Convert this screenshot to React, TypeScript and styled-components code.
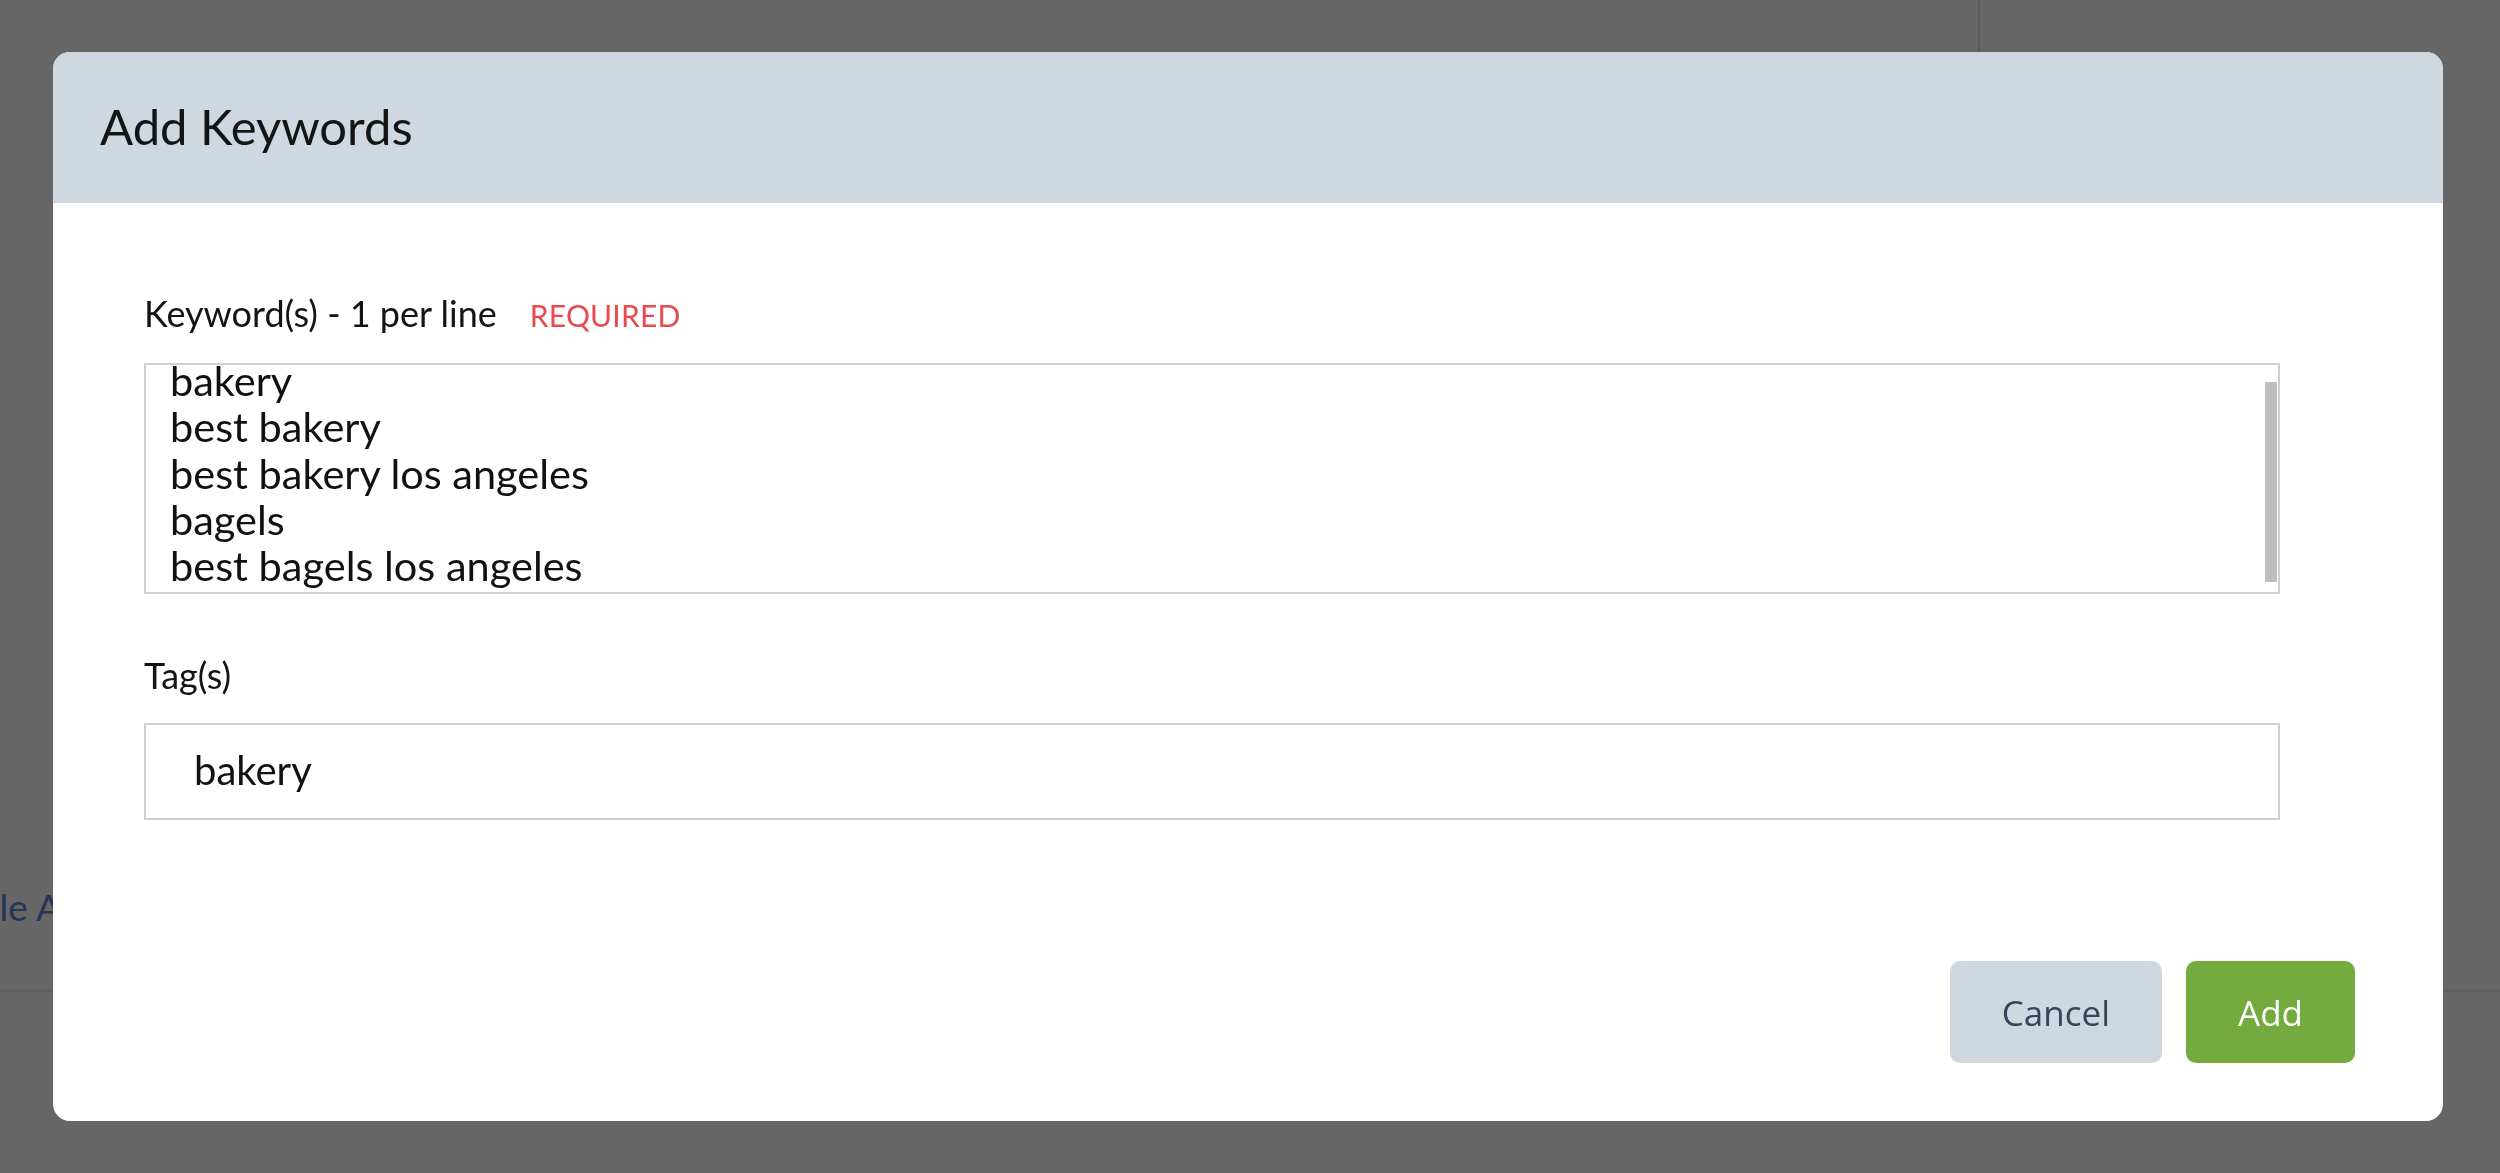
import { useEffect, useRef } from 'react';
import styled, { createGlobalStyle } from 'styled-components';

const GlobalStyle = createGlobalStyle`
    html, body {
        margin: 0;
        padding: 0;
        background: #ffffff;
        font-family: Lato, "Open Sans", sans-serif;
    }
`;

const Page = styled.div`
    width: 100vw;
    height: 100vh;
    overflow: hidden;
    background: #ffffff;
`;

const PageTopBar = styled.div`
    display: flex;
    height: 210px;
`;

const PageTopSection = styled.div`
    flex: 1;
`;

const PageTopAside = styled.div`
    width: 520px;
    border-left: 2px solid #e6e6e6;
`;

const PageRow = styled.div`
    display: flex;
    align-items: center;
    height: 200px;
    margin-top: 580px;
    border-bottom: 2px solid #eeeeee;
`;

const PageSideLink = styled.div`
    display: flex;
    justify-content: flex-end;
    width: 102px;
    overflow: hidden;
    white-space: nowrap;
    padding-top: 32px;
`;

const PageLinkText = styled.span`
    font-size: 37px;
    color: #5b86d6;
`;

const Overlay = styled.div`
    position: fixed;
    inset: 0;
    background: rgba(0, 0, 0, 0.6);
    display: flex;
    align-items: flex-start;
    padding: 52px 0 0 53px;
`;

const Modal = styled.div`
    width: 2390px;
    background: #ffffff;
    border-radius: 17px;
    overflow: hidden;
`;

const ModalHeader = styled.div`
    display: flex;
    align-items: center;
    height: 151px;
    padding-left: 47px;
    background: #cfd7e0;
`;

const ModalTitle = styled.h2`
    margin: 0;
    font-size: 49px;
    font-weight: 400;
    color: #141414;
    padding-bottom: 4px;
`;

const ModalBody = styled.div`
    display: flex;
    flex-direction: column;
    width: 2136px;
    padding: 88px 0 0 91px;
`;

type FieldLabelProps = {
    gap: number;
};

const FieldLabel = styled.label<FieldLabelProps>`
    display: flex;
    align-items: baseline;
    gap: 33px;
    font-size: 36px;
    line-height: 44px;
    color: #141414;
    margin-bottom: ${props => props.gap}px;
`;

const RequiredTag = styled.span`
    font-size: 30px;
    color: #e84a4f;
    letter-spacing: 0.2px;
`;

const KeywordBox = styled.div`
    display: flex;
    box-sizing: border-box;
    width: 100%;
    height: 231px;
    margin-bottom: 59px;
    border: 2px solid #d0d0d0;
    background: #ffffff;
`;

const KeywordArea = styled.textarea`
    flex: 1;
    box-sizing: border-box;
    height: 100%;
    margin: 0;
    padding: 4px 2px 4px 24px;
    border: none;
    resize: none;
    outline: none;
    overflow: hidden;
    font-family: Lato, "Open Sans", sans-serif;
    font-size: 41.5px;
    line-height: 46.3px;
    color: #111111;
`;

const ScrollRail = styled.div`
    display: flex;
    width: 12px;
    padding: 17px 1px 10px 0;
`;

const ScrollThumb = styled.div`
    flex: 1;
    background: #bdbfbb;
`;

const TagInput = styled.input`
    box-sizing: border-box;
    width: 100%;
    height: 97px;
    margin: 0;
    padding: 0 0 4px 48px;
    border: 2px solid #d0d0d0;
    border-radius: 0;
    outline: none;
    font-family: Lato, "Open Sans", sans-serif;
    font-size: 40px;
    color: #111111;
`;

const ModalFooter = styled.div`
    display: flex;
    justify-content: flex-end;
    gap: 24px;
    padding: 141px 88px 58px 0;
`;

type ActionButtonProps = {
    variant: 'secondary' | 'primary';
};

const ActionButton = styled.button<ActionButtonProps>`
    height: 102px;
    padding: 0 52px;
    border: none;
    border-radius: 10px;
    font-family: "Open Sans", Lato, sans-serif;
    font-size: 35px;
    background: ${props => (props.variant === 'primary' ? '#74aa3e' : '#cfd7e0')};
    color: ${props => (props.variant === 'primary' ? '#ffffff' : '#34445a')};
    cursor: pointer;
`;

const keywords = [
    'bakery',
    'best bakery',
    'best bakery los angeles',
    'bagels',
    'best bagels los angeles',
].join('\n');

const AddKeywordsModal = () => {
    const areaRef = useRef<HTMLTextAreaElement>(null);

    // the list is scrolled to its end, so the first line sits half under the top edge
    useEffect(() => {
        if (areaRef.current) {
            areaRef.current.scrollTop = areaRef.current.scrollHeight;
        }
    }, []);

    return (
        <Overlay>
            <Modal>
                <ModalHeader>
                    <ModalTitle>Add Keywords</ModalTitle>
                </ModalHeader>
                <ModalBody>
                    <FieldLabel gap={26}>
                        Keyword(s) - 1 per line
                        <RequiredTag>REQUIRED</RequiredTag>
                    </FieldLabel>
                    <KeywordBox>
                        <KeywordArea ref={areaRef} defaultValue={keywords} spellCheck={false} />
                        <ScrollRail>
                            <ScrollThumb />
                        </ScrollRail>
                    </KeywordBox>
                    <FieldLabel gap={26}>Tag(s)</FieldLabel>
                    <TagInput defaultValue="bakery" spellCheck={false} />
                </ModalBody>
                <ModalFooter>
                    <ActionButton variant="secondary">Cancel</ActionButton>
                    <ActionButton variant="primary">Add</ActionButton>
                </ModalFooter>
            </Modal>
        </Overlay>
    );
};

const App = () => {
    return (
        <>
            <GlobalStyle />
            <Page>
                <PageTopBar>
                    <PageTopSection />
                    <PageTopAside />
                </PageTopBar>
                <PageRow>
                    <PageSideLink>
                        <PageLinkText>Bulk Table Add</PageLinkText>
                    </PageSideLink>
                </PageRow>
            </Page>
            <AddKeywordsModal />
        </>
    );
};

export default App;
